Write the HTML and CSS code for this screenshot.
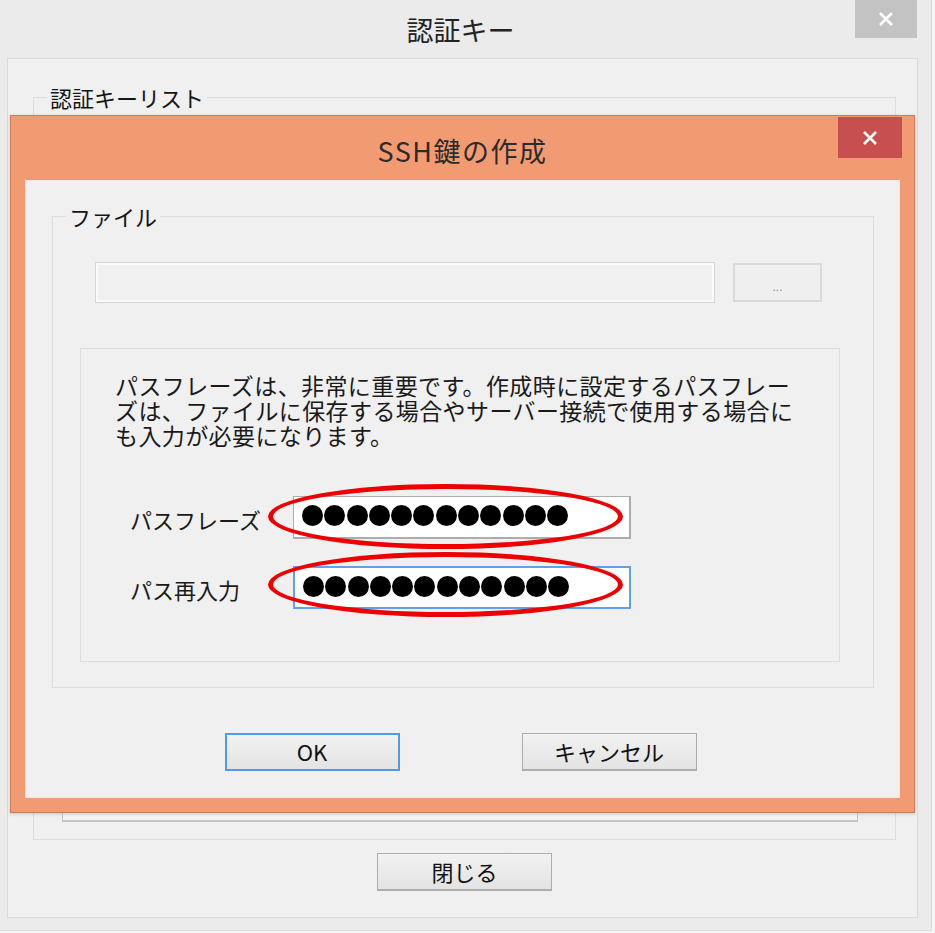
FILE: index.html
```html
<!DOCTYPE html>
<html lang="ja">
<head>
<meta charset="utf-8">
<title>認証キー</title>
<link rel="stylesheet" href="styles.css">
</head>
<body>
<div class="window">
  <div class="titlebar">
    <span class="tb-side"></span>
    <h1 class="title">認証キー</h1>
    <span class="tb-side tb-side--right">
      <button class="close close--gray" aria-label="閉じる">
        <svg width="16" height="16" viewBox="0 0 16 16"><path d="M2 2 L14 14 M14 2 L2 14" stroke="#fff" stroke-width="2.6" fill="none"/></svg>
      </button>
    </span>
  </div>
  <div class="client">
    <fieldset class="group group--list">
      <legend class="legend">認証キーリスト</legend>
      <div class="group-body group-body--list">
        <div class="listbox"></div>
      </div>
    </fieldset>
    <div class="actions actions--close">
      <button class="btn">閉じる</button>
    </div>
  </div>

  <div class="dialog">
    <div class="titlebar titlebar--dialog">
      <span class="tb-side"></span>
      <h2 class="title title--dialog">SSH鍵の作成</h2>
      <span class="tb-side tb-side--right">
        <button class="close close--red" aria-label="閉じる">
          <svg width="16" height="16" viewBox="0 0 16 16"><path d="M2 2 L14 14 M14 2 L2 14" stroke="#fff" stroke-width="2.6" fill="none"/></svg>
        </button>
      </span>
    </div>
    <div class="dialog-client">
      <fieldset class="group group--file">
        <legend class="legend">ファイル</legend>
        <div class="group-body group-body--file">
          <div class="file-row">
            <div class="file-field"></div>
            <button class="browse">...</button>
          </div>
          <div class="panel">
            <p class="desc"><span class="desc-line">パスフレーズは、非常に重要です。作成時に設定するパスフレー</span><span class="desc-line">ズは、ファイルに保存する場合やサーバー接続で使用する場合に</span><span class="desc-line">も入力が必要になります。</span></p>
            <div class="pw-row">
              <span class="pw-label">パスフレーズ</span>
              <div class="pw-wrap">
                <div class="pw-input">
                  <span class="dot"></span><span class="dot"></span><span class="dot"></span><span class="dot"></span><span class="dot"></span><span class="dot"></span><span class="dot"></span><span class="dot"></span><span class="dot"></span><span class="dot"></span><span class="dot"></span><span class="dot"></span>
                </div>
                <span class="ring"></span>
              </div>
            </div>
            <div class="pw-row pw-row--second">
              <span class="pw-label">パス再入力</span>
              <div class="pw-wrap">
                <div class="pw-input pw-input--focus">
                  <span class="dot"></span><span class="dot"></span><span class="dot"></span><span class="dot"></span><span class="dot"></span><span class="dot"></span><span class="dot"></span><span class="dot"></span><span class="dot"></span><span class="dot"></span><span class="dot"></span><span class="dot"></span>
                </div>
                <span class="ring ring--second"></span>
              </div>
            </div>
          </div>
        </div>
      </fieldset>
      <div class="actions actions--dialog">
        <button class="btn btn--default">OK</button>
        <button class="btn">キャンセル</button>
      </div>
    </div>
  </div>
</div>
</body>
</html>
```

FILE: styles.css
```css
* { box-sizing: border-box; }

html, body {
  margin: 0;
  padding: 0;
}

body {
  width: 935px;
  height: 933px;
  background: #f4f4f4;
  font-family: "Noto Sans CJK JP", "Noto Sans", sans-serif;
  color: #151515;
  overflow: hidden;
}

.window {
  position: relative;
  width: 932px;
  height: 931px;
  background: #ebebeb;
  border-right: 1px solid #d9d9d9;
  border-bottom: 1px solid #dcdcdc;
}

.titlebar {
  display: grid;
  grid-template-columns: 1fr auto 1fr;
  height: 58px;
  padding-right: 10px;
}

.title {
  margin: 0;
  align-self: center;
  font-size: 27px;
  font-weight: 400;
  line-height: 30px;
  color: #222;
  padding-top: 2px;
}

.tb-side--right {
  display: flex;
  justify-content: flex-end;
  align-items: flex-start;
}

.close {
  display: flex;
  align-items: center;
  justify-content: center;
  border: none;
  padding: 0;
  margin: 0;
}

.close--gray {
  width: 62px;
  height: 38px;
  background: #c3c3c3;
  margin-right: 4px;
}

.client {
  margin: 0 13px 0 7px;
  height: 860px;
  background: #f0f0f0;
  border: 1px solid #dadada;
  padding: 25px 21px 26px 25px;
}

.group {
  margin: 0;
  padding: 0;
  border: 1px solid #dcdcdc;
  min-inline-size: 0;
}

.legend {
  font-size: 22px;
  line-height: 26px;
  padding: 0 3px;
  margin-left: 13px;
}

.group-body--list {
  padding: 20px 37px 17px 28px;
}

.listbox {
  height: 692px;
  border: 1px solid #c4c4c4;
  border-bottom-width: 2px;
  background: #f3f3f3;
}

.actions {
  display: flex;
  justify-content: center;
}

.actions--close {
  margin-top: 13px;
}

.btn {
  width: 175px;
  height: 38px;
  font-family: inherit;
  font-size: 22px;
  line-height: 30px;
  color: #111;
  padding: 0 0 2px;
  border: 1px solid #adadad;
  border-width: 1px 1px 2px;
  background: linear-gradient(#f2f2f2, #e3e3e3);
}

.btn--default {
  border: 2px solid #4f9ae6;
}

/* dialog */
.dialog {
  position: absolute;
  left: 10px;
  top: 115px;
  width: 905px;
  height: 698px;
  background: #f29b73;
  border: 1px solid #cd7c5a;
  box-shadow: 0 1px 3px rgba(120, 60, 30, 0.25);
}

.titlebar--dialog {
  height: 63px;
  padding-right: 0;
}

.title--dialog {
  font-size: 27px;
  letter-spacing: 1.5px;
  color: #2b2b2b;
  padding-top: 6px;
}

.close--red {
  width: 64px;
  height: 41px;
  background: #c74f4f;
  margin-top: 1px;
  margin-right: 12px;
}

.dialog-client {
  margin: 0 14px;
  height: 619px;
  background: #f0f0f0;
  border: 1px solid #f6e3d9;
  border-top-color: #e19a78;
  padding: 23px 25px 26px 26px;
}

.group-body--file {
  padding: 33px 33px 25px 27px;
}

.file-row {
  display: flex;
  align-items: center;
  gap: 18px;
  margin-left: 15px;
  margin-bottom: 45px;
}

.file-field {
  width: 620px;
  height: 41px;
  border: 1px solid #d6d6d6;
  box-shadow: inset 0 0 0 2px #fbfbfb;
  background: #f0f0f0;
}

.browse {
  width: 89px;
  height: 39px;
  border: 2px solid #dadada;
  background: #efefef;
  font-family: "Liberation Sans", sans-serif;
  font-size: 12px;
  color: #8a8a8a;
  padding: 8px 0 0;
  letter-spacing: 0;
}

.panel {
  height: 314px;
  border: 1px solid #dcdcdc;
  padding: 24px 20px 0 34px;
}

.desc {
  margin: 0 0 48px;
  font-size: 23px;
  letter-spacing: 0.4px;
  white-space: nowrap;
  color: #1a1a1a;
}

.desc-line {
  display: block;
  height: 25px;
  line-height: 25px;
}

.pw-row {
  display: flex;
  align-items: center;
  margin-left: 15px;
}

.pw-row--second {
  margin-top: 27px;
}

.pw-label {
  width: 163px;
  font-size: 22px;
  line-height: 30px;
  padding-top: 2px;
  color: #1a1a1a;
}

.pw-wrap {
  position: relative;
}

.pw-input {
  width: 338px;
  height: 43px;
  background: #fff;
  border: 2px solid #acacac;
  border-width: 1px 2px 2px 1px;
  display: flex;
  align-items: center;
  gap: 1.3px;
  padding: 0 0 3px 8px;
}

.pw-input--focus {
  border: 2px solid #5ea2ea;
}

.dot {
  width: 21px;
  height: 21px;
  border-radius: 50%;
  background: #000;
  flex: none;
}

.ring {
  position: absolute;
  left: -25px;
  top: -12px;
  width: 355px;
  height: 65px;
  border: 5px solid #ee0000;
  border-radius: 50%;
  pointer-events: none;
}

.ring--second {
  top: -14px;
}

.actions--dialog {
  margin-top: 45px;
  gap: 122px;
  padding-right: 5px;
}
```
